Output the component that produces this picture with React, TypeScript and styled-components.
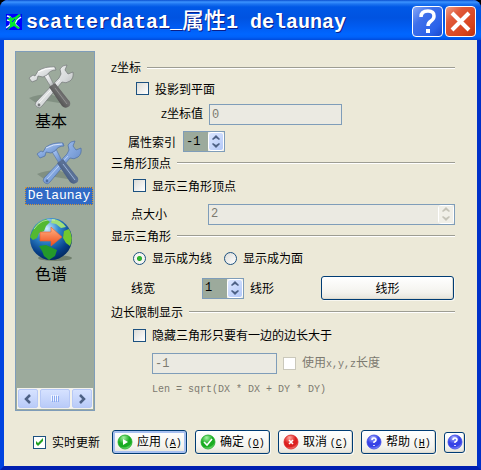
import React, { useState } from "react";
import styled, { createGlobalStyle, css } from "styled-components";

const GlobalStyle = createGlobalStyle`
  *, *::before, *::after { box-sizing: border-box; }
  body {
    margin: 0;
    background: #000;
    color: #000;
    font: 12px/16px "Noto Sans CJK SC", sans-serif;
  }
  button, input { font: inherit; color: inherit; margin: 0; }
`;

const Window = styled.main`
  min-height: 100vh;
  display: flex;
  flex-direction: column;
  background: #ece9d8;
  border: 4px solid #0043e0;
  border-top: 0;
  border-right-color: #0030c8;
  border-bottom-color: #001fb0;
  border-radius: 8px 8px 0 0;
`;

const TitleBar = styled.header`
  height: 40px;
  margin: 0 -4px;
  padding: 3px 5px 0 6px;
  display: flex;
  align-items: center;
  gap: 4px;
  border-radius: 8px 8px 0 0;
  background: linear-gradient(#0a4fd0 0, #3c94ff 2px, #1c74f0 4px, #0058e6 7px, #0053e1 18px, #005cf2 27px, #0066ff 34px, #0062fa 37px, #004bdc 40px);
`;

const Title = styled.h1`
  flex: 1;
  margin: 0;
  padding-top: 3px;
  color: #fff;
  font: 700 20px/30px "Liberation Mono", "Noto Sans CJK SC", monospace;
  white-space: nowrap;
  text-shadow: 1px 1px 0 #0b1f88;
`;

const TitleHan = styled.span`
  font-size: 22px;
  font-weight: 500;
`;

const CaptionButton = styled.button<{ $danger?: boolean }>`
  width: 31px;
  height: 31px;
  padding: 0;
  display: grid;
  place-items: center;
  border: 1px solid #fff;
  border-radius: 4px;
  background: ${(p) =>
    p.$danger
      ? "linear-gradient(135deg, #f0a088 0, #e0593a 30%, #d8431c 75%, #b93210 100%)"
      : "linear-gradient(135deg, #86a8f8 0, #3f70ea 35%, #2a62ea 75%, #1a48cc 100%)"};
`;

const CaptionGroup = styled.div`
  display: flex;
  gap: 2px;
`;

const Body = styled.div`
  flex: 1;
  display: grid;
  grid-template-columns: 80px minmax(0, 1fr);
  gap: 16px;
  padding: 11px 22px 0 11px;
`;

const Sidebar = styled.nav`
  display: flex;
  flex-direction: column;
  padding: 12px 1px 1px;
  border: 1px solid #7f9db9;
  background: #9caa9c;
`;

const SideList = styled.div`
  flex: 1;
  display: flex;
  flex-direction: column;
  gap: 10px;
`;

const SideItem = styled.button<{ $selected?: boolean }>`
  display: flex;
  flex-direction: column;
  align-items: center;
  width: 68px;
  padding: 0;
  border: 0;
  background: none;
  ${(p) => p.$selected && css`align-self: flex-end;`}
`;

const SideText = styled.span<{ $selected?: boolean }>`
  font-size: 16px;
  line-height: 20px;
  ${(p) =>
    p.$selected &&
    css`
      width: 100%;
      margin-top: 1px;
      font: 13px/18px "Liberation Mono", monospace;
      color: #fff;
      background: #316ac5;
      outline: 1px dotted #ce953a;
      outline-offset: -1px;
    `}
`;

const ScrollBar = styled.div`
  display: grid;
  grid-template-columns: 20px 1fr 20px;
  gap: 2px;
  padding: 1px;
  background: #f3f2ec;
`;

const ScrollPart = styled.button`
  height: 19px;
  padding: 0;
  display: grid;
  place-items: center;
  border: 1px solid #b6c8f6;
  border-radius: 2px;
  background: linear-gradient(#d6e2ff, #b9cbf8);
`;

const Panel = styled.div`
  padding-top: 9px;
`;

const Group = styled.fieldset`
  min-width: 0;
  margin: 0;
  padding: 0;
  border: 0;
`;

const GroupTitle = styled.legend`
  width: 100%;
  height: 16px;
  padding: 0;
  display: flex;
  align-items: center;
  gap: 6px;
  white-space: nowrap;
  &::after {
    content: "";
    flex: 1;
    height: 2px;
    background: #9d9d93;
    border-bottom: 1px solid #fff;
  }
`;

const Row = styled.div<{ $height: number; $indent: number }>`
  height: ${(p) => p.$height}px;
  padding-left: ${(p) => p.$indent}px;
  display: flex;
  align-items: center;
  gap: 6px;
  white-space: nowrap;
`;

const FieldLabel = styled.label<{ $width?: number }>`
  flex: none;
  ${(p) => p.$width && css`width: ${p.$width}px;`}
`;

const Latin = styled.span`
  font-family: "Liberation Mono", monospace;
  font-size: 10px;
`;

const Formula = styled.output`
  font: 10px/16px "Liberation Mono", monospace;
  color: #7c7a70;
`;

const Choice = styled.label<{ $disabled?: boolean }>`
  display: flex;
  align-items: center;
  gap: 6px;
  color: ${(p) => (p.$disabled ? "#7c7a70" : "#000")};
`;

const Check = styled.input.attrs({ type: "checkbox" })`
  appearance: none;
  flex: none;
  width: 13px;
  height: 13px;
  border: 1px solid #1c5180;
  background: linear-gradient(135deg, #dcdcd7, #fff);
  &:disabled { border-color: #cac8bb; background: #fff; }
  &:checked {
    background: #fff url("data:image/svg+xml,%3Csvg xmlns='http://www.w3.org/2000/svg' viewBox='0 0 11 11'%3E%3Cpath d='M2 4v3l2 2 5-5V1L4 6z' fill='%2321a121'/%3E%3C/svg%3E") center / 11px 11px;
  }
`;

const Radio = styled.input.attrs({ type: "radio" })`
  appearance: none;
  flex: none;
  width: 13px;
  height: 13px;
  border: 1px solid #1c5180;
  border-radius: 50%;
  background: linear-gradient(135deg, #dcdcd7, #fff);
  &:checked { background: radial-gradient(circle, #30b830 0 2px, #23a023 2px, #f6f6f2 3px); }
`;

const fieldFrame = css`
  height: 21px;
  border: 1px solid #7f9db9;
  background: #ebeae2;
`;

const TextBox = styled.input<{ $width: number }>`
  ${fieldFrame}
  flex: 0 1 ${(p) => p.$width}px;
  min-width: 0;
  padding: 0 2px;
  font: 12px/16px "Liberation Mono", monospace;
  &:disabled { color: #7c7a70; }
`;

const SpinFrame = styled.div<{ $fill?: boolean }>`
  ${fieldFrame}
  flex: ${(p) => (p.$fill ? "1" : "0 0 42px")};
  display: flex;
`;

const SpinInput = styled.input`
  flex: 1;
  width: 0;
  min-width: 0;
  padding: 0 2px;
  border: 0;
  background: #9caa9c;
  font: 12px/16px "Liberation Mono", monospace;
  &:disabled { background: #ebeae2; color: #7c7a70; }
`;

const SpinButtons = styled.div`
  width: 16px;
  display: flex;
  flex-direction: column;
  border: 1px solid #fff;
  border-radius: 3px;
  background: linear-gradient(135deg, #dce7ff, #b3c8f8);
`;

const SpinButton = styled.button`
  flex: 1;
  min-height: 0;
  padding: 0;
  border: 0;
  display: grid;
  place-items: center;
  color: #4d6185;
  background: none;
  &:disabled { color: #c5c4b9; background: #f0efe8; }
`;

const PushButton = styled.button<{ $width?: number; $focus?: boolean }>`
  ${(p) => (p.$width ? css`width: ${p.$width}px;` : css`flex: 1; margin-right: 1px;`)}
  height: 24px;
  padding: 0;
  display: flex;
  align-items: center;
  justify-content: center;
  gap: 4px;
  border: 1px solid #003c74;
  border-radius: 3px;
  background: linear-gradient(#fff, #f4f3ee 70%, #e6e4da);
  box-shadow: ${(p) => (p.$focus ? "inset 0 0 0 2px #a8c0f0, 1px 1px 0 #f8f7f0" : "inset -1px -1px 0 #dddbd0, 1px 1px 0 #f8f7f0")};
  white-space: nowrap;
`;

const IconButton = styled(PushButton)`
  height: 21px;
`;

const Footer = styled.footer`
  display: flex;
  align-items: center;
  gap: 8px;
  padding: 19px 12px 12px 29px;
`;

const LiveUpdate = styled.div`
  margin-right: auto;
  white-space: nowrap;
`;

function AppIcon() {
  return (
    <svg width="16" height="16" viewBox="0 0 16 16">
      <path fill="#0000ff" d="M0 0h16v16H0z" />
      <path d="M1 2l3 1 2 3M15 3l-4 3-2 4 4 4M0 14l4-3 1-4M5 7L1 6M9 10l-4 2" stroke="#e8ffff" strokeWidth="1.500" fill="none" />
      <path d="M3 1l3 3 3-1 4-3 2 1-4 4-2 3 1 3 4 3-2 1-4-3-4 2-2 2H1l3-4V7L1 5l3-1z" fill="#00e830" />
      <path d="M6 8l3-3" stroke="#0000ff" />
    </svg>
  );
}

function Tools({ id, blue }: { id: string; blue?: boolean }) {
  const edge = blue ? "#4e6fa3" : "#737779";
  return (
    <svg width="46" height="46" viewBox="0 0 46 46">
      <defs>
        <linearGradient id={`${id}-steel`} x1="0" y1="0" x2="1" y2="1">
          <stop offset="0" stopColor={blue ? "#b8d1fa" : "#ffffff"} />
          <stop offset=".55" stopColor={blue ? "#7ea2db" : "#d8dbdc"} />
          <stop offset="1" stopColor={blue ? "#4c6fab" : "#8d9293"} />
        </linearGradient>
        <linearGradient id={`${id}-grip`} x1="0" y1="1" x2="1" y2="0">
          <stop offset="0" stopColor={blue ? "#273b60" : "#262626"} />
          <stop offset=".55" stopColor={blue ? "#5c7398" : "#707070"} />
          <stop offset="1" stopColor={blue ? "#293e65" : "#303030"} />
        </linearGradient>
      </defs>
      <path d="M1 34q11-5 23-3l18 6-4 3-19-3-11 2z" fill="#6f7e72" opacity=".6" />
      <path d="M33 10l-1-5q2-4 7-4l-2 5 3 4 5-2q1 6-3 9-4 3-8 1L14 42q-2 3-5 1-3-2-1-5l23-24z" fill={`url(#${id}-steel)`} stroke={edge} strokeWidth=".7" />
      <path d="M32 16L11 39" stroke={blue ? "#bad0f3" : "#f7f7f7"} />
      <circle cx="11" cy="41" r="1.400" fill={edge} />
      <path d="M15 10l5-1 7 14-3 2z" fill={`url(#${id}-steel)`} stroke={edge} strokeWidth=".6" />
      <path d="M1 14l4-3 2 1 3-5q7-5 17-4l1 3q-6 0-9 5l-4 2-5-1-1 4-5 2z" fill={`url(#${id}-steel)`} stroke={edge} strokeWidth=".7" />
      <path d="M10 8q7-4 16-4" stroke={blue ? "#d7e4fb" : "#fff"} fill="none" />
      <path d="M21 23l6-4 15 19q1 4-2 5-3 2-6-1z" fill={`url(#${id}-grip)`} />
      <path d="M27 24l12 16" stroke={blue ? "#9bb4da" : "#929292"} strokeWidth="1" />
    </svg>
  );
}

function Globe() {
  return (
    <svg width="46" height="48" viewBox="0 -2 46 48">
      <defs>
        <radialGradient id="ocean" cx=".4" cy=".25" r=".8">
          <stop offset="0" stopColor="#d0efff" />
          <stop offset=".35" stopColor="#328bd0" />
          <stop offset=".75" stopColor="#063f88" />
          <stop offset="1" stopColor="#02265a" />
        </radialGradient>
        <linearGradient id="arrow" x1="0" y1="0" x2="0" y2="1">
          <stop offset="0" stopColor="#ffb486" />
          <stop offset="1" stopColor="#f04c18" />
        </linearGradient>
      </defs>
      <ellipse cx="27" cy="41" rx="17" ry="3" fill="#53624e" opacity=".6" />
      <circle cx="23" cy="22" r="21" fill="url(#ocean)" />
      <path d="M4 15Q8 5 18 2l4 3-4 4-2 5-5 2-2 5-4 2-3-3z" fill="#53b932" />
      <path d="M24 2q8 0 14 8l-5 1-5-4-5-1z" fill="#a1df79" />
      <path d="M36 14l5-2q5 9 1 17l-4-3-3-5z" fill="#72c82e" />
      <path d="M11 29l7-1 11 5-2 6-6 4-5-4-2-5z" fill="#24992a" />
      <path d="M12 15h11v-5l11 10-11 9v-5H12z" fill="url(#arrow)" stroke="#e55b2c" strokeWidth=".6" />
      <path d="M6 12Q13 1 27 3" stroke="#fff" opacity=".5" fill="none" />
    </svg>
  );
}

type BallKind = "play" | "ok" | "cancel" | "help";

function Ball({ kind, id }: { kind: BallKind; id: string }) {
  const color = kind === "cancel" ? "#dc2020" : kind === "help" ? "#3742e6" : "#19ac22";
  const light = kind === "cancel" ? "#ffaaa0" : kind === "help" ? "#a6b0ff" : "#a4f3a2";
  const marks: Record<BallKind, string> = {
    play: "M6 5l5 3-5 3z",
    ok: "M4 8l3 3 5-6",
    cancel: "M6 6l4 4M10 6l-4 4",
    help: "M6 6q0-2 2-2t2 2q0 1-2 2v1M8 11v1",
  };
  return (
    <svg width="16" height="16" viewBox="0 0 16 16">
      <defs>
        <radialGradient id={id} cx=".4" cy=".2" r=".85">
          <stop offset="0" stopColor={light} />
          <stop offset=".5" stopColor={color} />
          <stop offset=".75" stopColor={color} />
          <stop offset="1" stopColor={light} />
        </radialGradient>
      </defs>
      <circle cx="8" cy="8" r="7" fill={`url(#${id})`} stroke={color} strokeWidth=".8" />
      <path d={marks[kind]} stroke="#fff" strokeWidth={kind === "play" ? 0 : 1.6} fill={kind === "play" ? "#fff" : "none"} />
    </svg>
  );
}

function Chevron({ right }: { right?: boolean }) {
  return (
    <svg width="8" height="10" viewBox="0 0 8 10">
      <path d={right ? "M2 1l4 4-4 4" : "M6 1L2 5l4 4"} fill="none" stroke="#4d6185" strokeWidth="2.500" />
    </svg>
  );
}

interface SpinProps {
  id: string;
  initial: number;
  disabled?: boolean;
  fill?: boolean;
}

function Spin({ id, initial, disabled, fill }: SpinProps) {
  const [value, setValue] = useState(String(initial));
  const step = (delta: number) => setValue(String((Number(value) || 0) + delta));
  return (
    <SpinFrame $fill={fill}>
      <SpinInput id={id} inputMode="numeric" disabled={disabled} value={value} onChange={(e) => setValue(e.target.value)} />
      <SpinButtons>
        <SpinButton type="button" aria-label="增加" disabled={disabled} onClick={() => step(1)}>
          <svg width="8" height="5" viewBox="0 0 8 5"><path d="M0 4l4-4 4 4-1 1-3-2-3 2z" fill="currentColor" /></svg>
        </SpinButton>
        <SpinButton type="button" aria-label="减少" disabled={disabled} onClick={() => step(-1)}>
          <svg width="8" height="5" viewBox="0 0 8 5"><path d="M0 1l4 4 4-4-1-1-3 2-3-2z" fill="currentColor" /></svg>
        </SpinButton>
      </SpinButtons>
    </SpinFrame>
  );
}

const actions: { kind: BallKind; text: string; hotkey: string }[] = [
  { kind: "play", text: "应用", hotkey: "A" },
  { kind: "ok", text: "确定", hotkey: "O" },
  { kind: "cancel", text: "取消", hotkey: "C" },
  { kind: "help", text: "帮助", hotkey: "H" },
];

export default function App() {
  return (
    <>
      <GlobalStyle />
      <Window>
        <TitleBar>
          <AppIcon />
          <Title>scatterdata1_<TitleHan>属性</TitleHan>1 delaunay</Title>
          <CaptionGroup>
            <CaptionButton type="button" aria-label="帮助">
              <svg width="25" height="27" viewBox="0 0 25 27">
                <path d="M6 9q0-6 7-6 6 0 6 5 0 3-3 5-3 2-3 5" fill="none" stroke="#fff" strokeWidth="3.500" />
                <path d="M11 21h4v4h-4z" fill="#fff" />
              </svg>
            </CaptionButton>
            <CaptionButton type="button" aria-label="关闭" $danger>
              <svg width="23" height="23" viewBox="0 0 23 23">
                <path d="M3 3l17 17M20 3L3 20" stroke="#fff" strokeWidth="4" />
              </svg>
            </CaptionButton>
          </CaptionGroup>
        </TitleBar>
        <Body>
          <Sidebar>
            <SideList>
              <SideItem type="button"><Tools id="basic" /><SideText>基本</SideText></SideItem>
              <SideItem type="button" $selected><Tools id="mesh" blue /><SideText $selected>Delaunay</SideText></SideItem>
              <SideItem type="button"><Globe /><SideText>色谱</SideText></SideItem>
            </SideList>
            <ScrollBar>
              <ScrollPart type="button" aria-label="向左"><Chevron /></ScrollPart>
              <ScrollPart type="button" aria-label="滚动">
                <svg width="8" height="7" viewBox="0 0 8 7" shapeRendering="crispEdges">
                  <path d="M0 0h1v6H0zM2 0h1v6H2zM4 0h1v6H4zM6 0h1v6H6z" fill="#f0f5ff" />
                  <path d="M1 1h1v6H1zM3 1h1v6H3zM5 1h1v6H5zM7 1h1v6H7z" fill="#8caaf0" />
                </svg>
              </ScrollPart>
              <ScrollPart type="button" aria-label="向右"><Chevron right /></ScrollPart>
            </ScrollBar>
          </Sidebar>
          <Panel>
            <Group>
              <GroupTitle><span><Latin>Z</Latin>坐标</span></GroupTitle>
              <Row $height={25} $indent={25}><Choice><Check />投影到平面</Choice></Row>
              <Row $height={27} $indent={50}>
                <FieldLabel htmlFor="z-value"><Latin>Z</Latin>坐标值</FieldLabel>
                <TextBox id="z-value" $width={133} defaultValue="0" disabled />
              </Row>
              <Row $height={27} $indent={17}>
                <FieldLabel htmlFor="attribute" $width={49}>属性索引</FieldLabel>
                <Spin id="attribute" initial={-1} />
              </Row>
            </Group>
            <Group>
              <GroupTitle>三角形顶点</GroupTitle>
              <Row $height={29} $indent={22}><Choice><Check />显示三角形顶点</Choice></Row>
              <Row $height={28} $indent={20}>
                <FieldLabel htmlFor="point-size" $width={71}>点大小</FieldLabel>
                <Spin id="point-size" initial={2} disabled fill />
              </Row>
            </Group>
            <Group>
              <GroupTitle>显示三角形</GroupTitle>
              <Row $height={28} $indent={22}>
                <Choice><Radio name="display" defaultChecked />显示成为线</Choice>
                <Row as="span" $height={16} $indent={6}><Choice><Radio name="display" />显示成为面</Choice></Row>
              </Row>
              <Row $height={32} $indent={20}>
                <FieldLabel htmlFor="line-width" $width={65}>线宽</FieldLabel>
                <Spin id="line-width" initial={1} />
                <FieldLabel htmlFor="line-style" $width={65}>线形</FieldLabel>
                <PushButton id="line-style" type="button">线形</PushButton>
              </Row>
            </Group>
            <Group>
              <GroupTitle>边长限制显示</GroupTitle>
              <Row $height={30} $indent={22}><Choice><Check />隐藏三角形只要有一边的边长大于</Choice></Row>
              <Row $height={27} $indent={41}>
                <TextBox $width={125} aria-label="边长限制" defaultValue="-1" disabled />
                <Choice $disabled><Check disabled /><span>使用<Latin>x,y,z</Latin>长度</span></Choice>
              </Row>
              <Row $height={26} $indent={41}><Formula>Len = sqrt(DX * DX + DY * DY)</Formula></Row>
            </Group>
          </Panel>
        </Body>
        <Footer>
          <LiveUpdate><Choice><Check defaultChecked />实时更新</Choice></LiveUpdate>
          {actions.map(({ kind, text, hotkey }) => (
            <PushButton key={kind} type="button" $width={75} $focus={kind === "play"}>
              <Ball kind={kind} id={`action-${kind}`} />
              <span>{text} <Latin>(<u>{hotkey}</u>)</Latin></span>
            </PushButton>
          ))}
          <IconButton type="button" $width={21} aria-label="帮助"><Ball kind="help" id="context-help" /></IconButton>
        </Footer>
      </Window>
    </>
  );
}
